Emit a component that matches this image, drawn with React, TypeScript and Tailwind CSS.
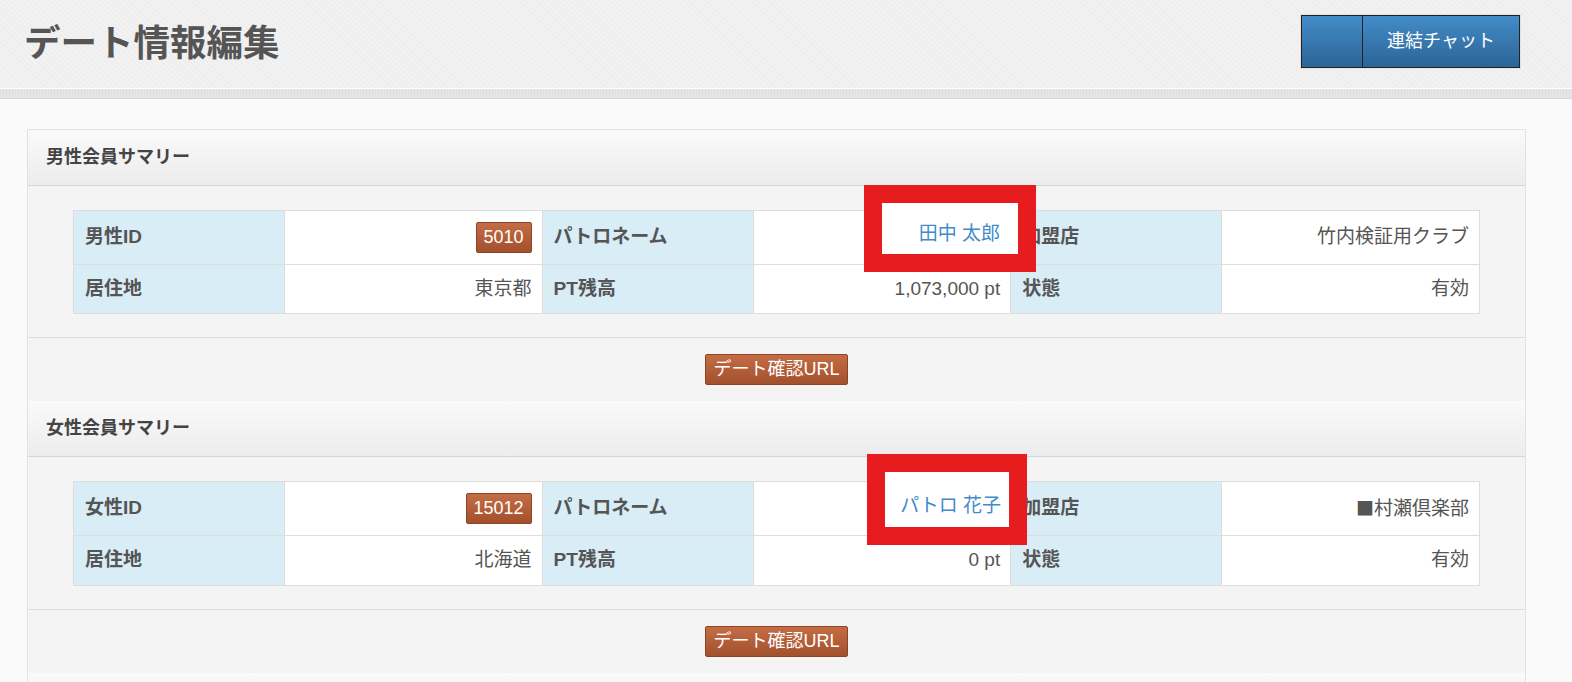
import React from "react";

type Props = {
  title: string;
  idLabel: string;
  id: string;
  name: string;
  shop: React.ReactNode;
  area: string;
  pt: string;
  first: boolean;
};

function Section({ title, idLabel, id, name, shop, area, pt, first }: Props) {
  return (
    <div>
      <div className="h-[56px] flex items-center pl-[18px] border-b border-[#d6d6d6] bg-gradient-to-b from-[#fafafa] to-[#ececec]">
        <span className="text-[18px] font-bold text-[#444]">{title}</span>
      </div>
      <div className="bg-[#f4f4f4] px-[45px] pt-[24px] pb-[23px] border-b border-[#dedede]">
        <div className="relative">
          <table className="w-full table-fixed border-collapse text-[19px] text-[#555]">
            <tbody>
              <tr className="h-[54px]">
                <th className="w-[15%] border border-[#dddddd] bg-[#d9edf7] text-left font-bold px-[11px] align-middle">{idLabel}</th>
                <td className="w-[18.33%] border border-[#dddddd] bg-white text-right px-[10px] align-middle">
                  <span className="inline-block h-[31px] leading-[29px] px-[7px] text-[18px] text-white border border-[#8f4322] rounded-[2px] bg-gradient-to-b from-[#c46d45] to-[#a3502d] align-middle">{id}</span>
                </td>
                <th className="w-[15%] border border-[#dddddd] bg-[#d9edf7] text-left font-bold px-[11px] align-middle">パトロネーム</th>
                <td className="w-[18.33%] border border-[#dddddd] bg-white text-right px-[10px] align-middle text-[#428bca]">{name}</td>
                <th className="w-[15%] border border-[#dddddd] bg-[#d9edf7] text-left font-bold px-[11px] align-middle">加盟店</th>
                <td className="border border-[#dddddd] bg-white text-right px-[10px] align-middle">{shop}</td>
              </tr>
              <tr className={first ? "h-[49px]" : "h-[50px]"}>
                <th className="border border-[#dddddd] bg-[#d9edf7] text-left font-bold px-[11px] align-middle">居住地</th>
                <td className="border border-[#dddddd] bg-white text-right px-[10px] align-middle">{area}</td>
                <th className="border border-[#dddddd] bg-[#d9edf7] text-left font-bold px-[11px] align-middle">PT残高</th>
                <td className="border border-[#dddddd] bg-white text-right px-[10px] align-middle">{pt}</td>
                <th className="border border-[#dddddd] bg-[#d9edf7] text-left font-bold px-[11px] align-middle">状態</th>
                <td className="border border-[#dddddd] bg-white text-right px-[10px] align-middle">有効</td>
              </tr>
            </tbody>
          </table>
          {first ? (
            <div className="absolute left-[791px] top-[-25px] w-[172px] h-[87px] border-[18px] border-[#e71c1e] bg-white flex justify-end items-center pt-[12px] pr-[18px] text-[19px] text-[#428bca] whitespace-nowrap">
              {name}
            </div>
          ) : (
            <div className="absolute left-[794px] top-[-27px] w-[160px] h-[91px] border-[18px] border-[#e71c1e] bg-white flex justify-end items-center pt-[13px] pr-[8px] text-[19px] text-[#428bca] whitespace-nowrap">
              {name}
            </div>
          )}
        </div>
      </div>
      <div className="bg-[#f4f4f4] h-[63px] flex justify-center pt-[16px]">
        <span className="inline-block h-[31px] leading-[29px] px-[7px] text-[18px] text-white border border-[#8f4322] rounded-[2px] bg-gradient-to-b from-[#c46d45] to-[#a3502d]">
          デート確認URL
        </span>
      </div>
    </div>
  );
}

export default function App() {
  return (
    <div className="min-h-screen bg-[#fafafa] font-['Liberation_Sans','Noto_Sans_CJK_JP',sans-serif] overflow-hidden">
      <header className="h-[88px] flex justify-between bg-[#f0f0f0] bg-[repeating-linear-gradient(45deg,#eeeeee_0px,#eeeeee_2px,#f2f2f2_2px,#f2f2f2_4px)] pl-[24px] pr-[51px]">
        <h1 className="text-[36.5px] font-bold text-[#555] leading-none pt-[26px]">デート情報編集</h1>
        <div className="mt-[14px] self-start border border-[#e2e2e2]">
          <div className="flex h-[53px] border border-[#222] bg-gradient-to-b from-[#438cc9] to-[#2c6596]">
            <div className="w-[61px] border-r border-[#222]" />
            <div className="w-[156px] flex items-center justify-center text-[18px] text-white">連結チャット</div>
          </div>
        </div>
      </header>
      <div className="h-[11px] border-t border-white border-b border-b-[#d8d8d8] bg-[#e2e2e2] bg-[repeating-linear-gradient(90deg,#dfdfdf_0px,#dfdfdf_1px,#e6e6e6_1px,#e6e6e6_3px)]" />
      <div className="pt-[30px] pl-[27px]">
        <div className="w-[1499px] border border-[#e2e2e2] border-b-0 bg-[#f9f9f9]">
          <Section
            first
            title="男性会員サマリー"
            idLabel="男性ID"
            id="5010"
            name="田中 太郎"
            shop="竹内検証用クラブ"
            area="東京都"
            pt="1,073,000 pt"
          />
          <Section
            first={false}
            title="女性会員サマリー"
            idLabel="女性ID"
            id="15012"
            name="パトロ 花子"
            shop={
              <>
                <span className="font-['Noto_Sans_CJK_JP',sans-serif] text-[18px]">■</span>村瀬倶楽部
              </>
            }
            area="北海道"
            pt="0 pt"
          />
          <div className="h-[56px] bg-gradient-to-b from-[#fafafa] to-[#ececec]" />
        </div>
      </div>
    </div>
  );
}
